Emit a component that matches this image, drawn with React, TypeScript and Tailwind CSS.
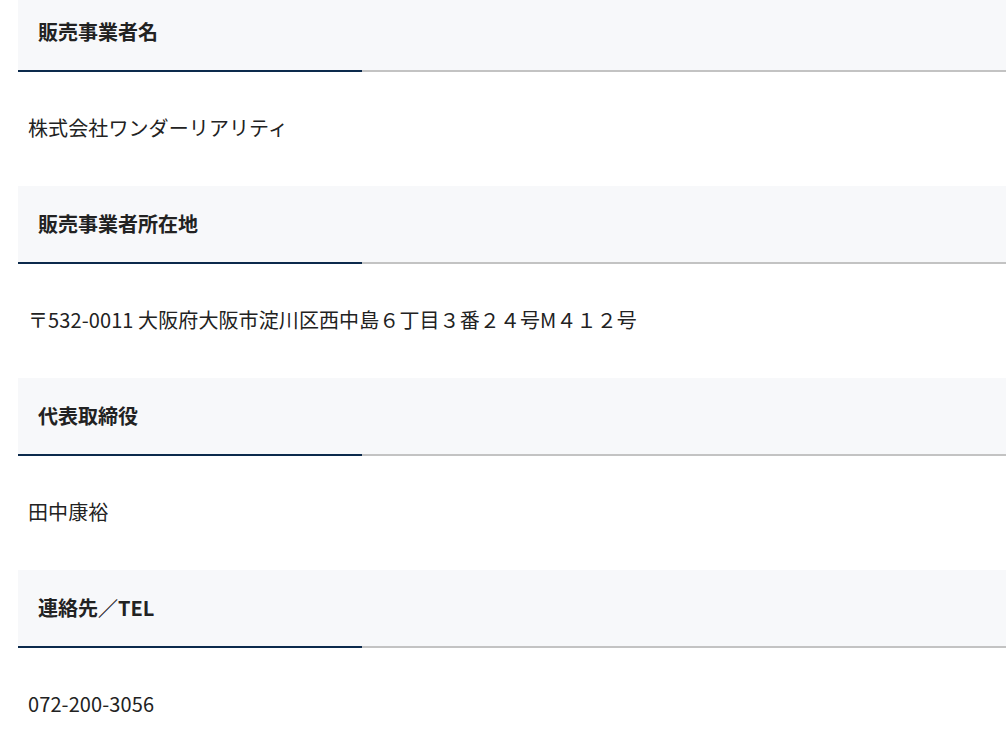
const rows = [
  { label: '販売事業者名', value: '株式会社ワンダーリアリティ' },
  { label: '販売事業者所在地', value: '〒532-0011 大阪府大阪市淀川区西中島６丁目３番２４号M４１２号' },
  { label: '代表取締役', value: '田中康裕' },
  { label: '連絡先／TEL', value: '072-200-3056' },
]

export default function App() {
  return (
    <div
      className="bg-white text-[#222] -mt-[6px] pl-[18px]"
      style={{ fontFamily: '"Noto Sans CJK JP", "Noto Sans", sans-serif' }}
    >
      {rows.map(row => (
        <div key={row.label}>
          <div className="h-[76px] bg-[#f7f8fa] flex items-center pl-[20px]">
            <h2 className="text-[20px] leading-none font-bold">{row.label}</h2>
          </div>
          <div className="flex h-[2px]">
            <div className="w-[344px] bg-[#0c2a4c]" />
            <div className="flex-1 bg-[#c3c3c3]" />
          </div>
          <div className="h-[114px] flex items-center pl-[10px] pb-[2px]">
            <p className="text-[20px] leading-none tracking-[0.1px]">{row.value}</p>
          </div>
        </div>
      ))}
    </div>
  )
}
